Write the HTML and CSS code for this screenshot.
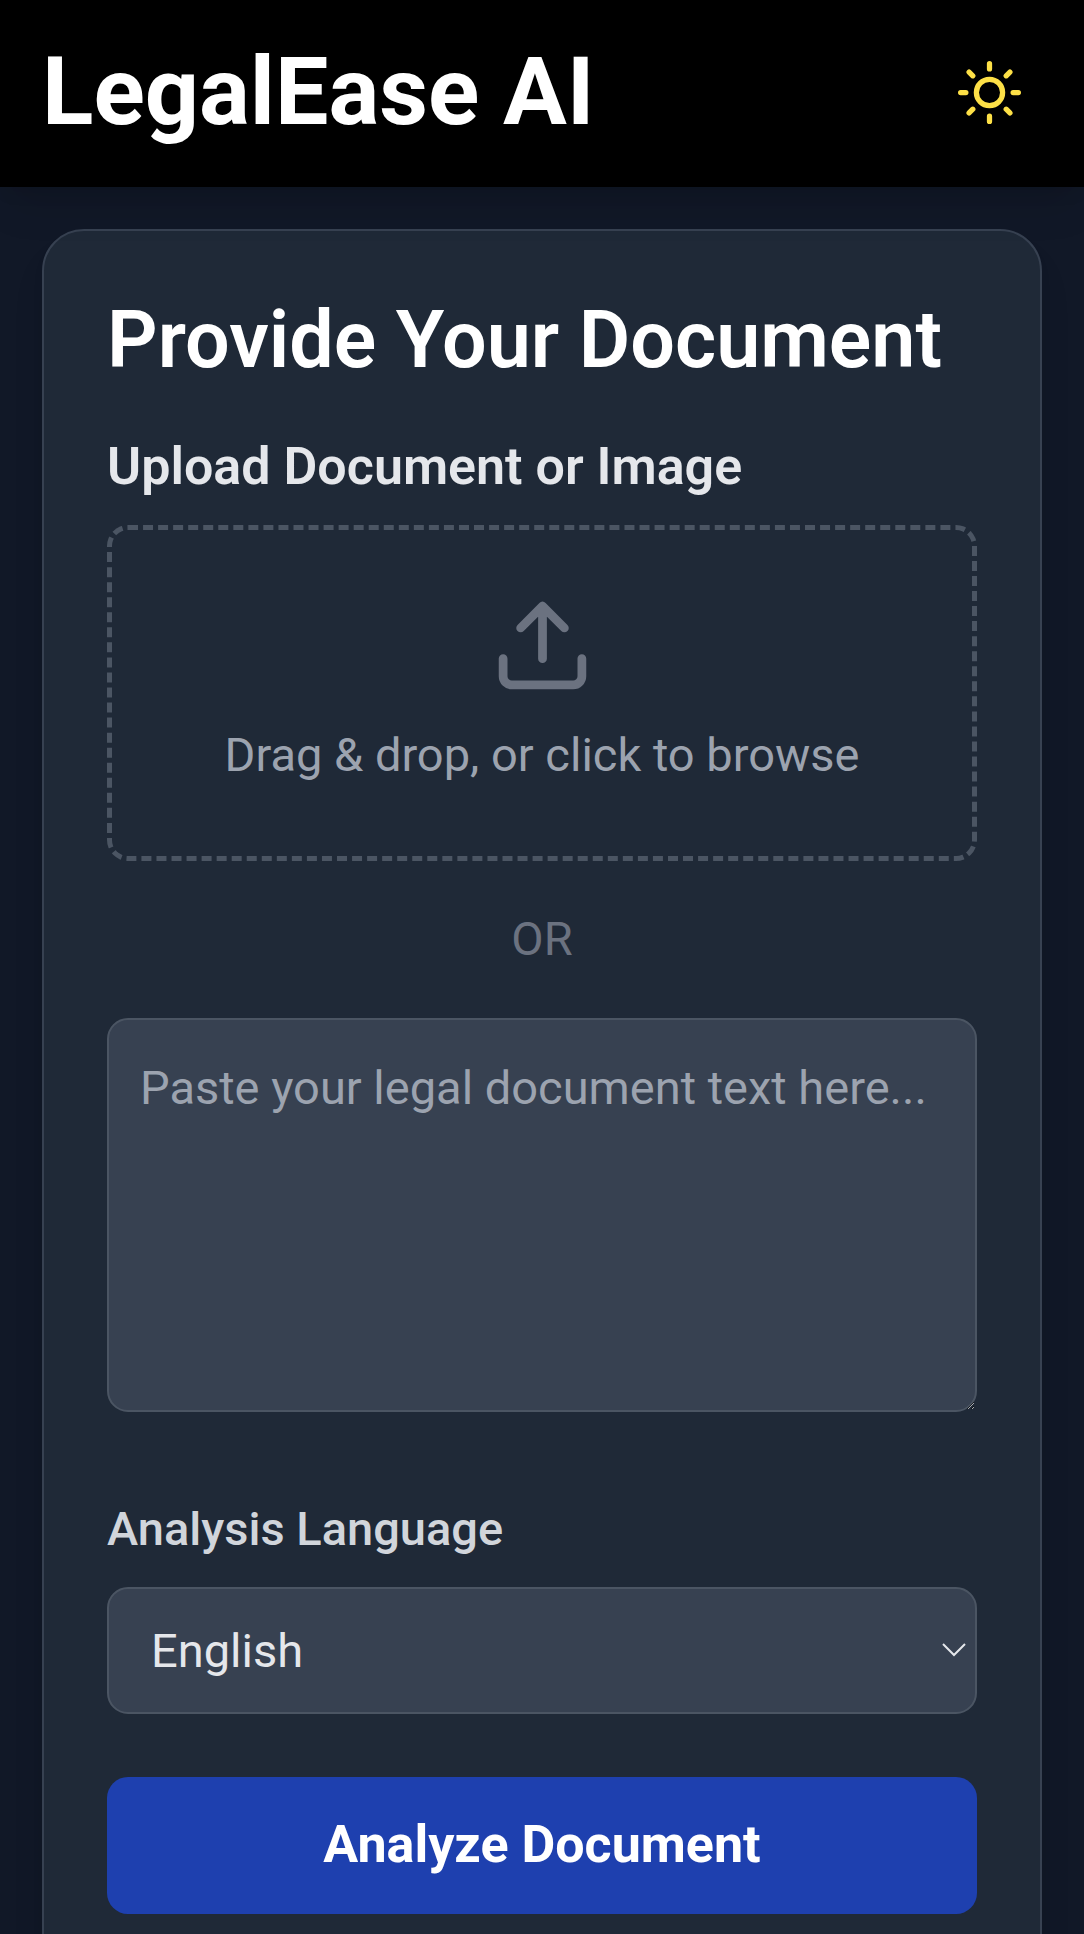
FILE: index.html
```html
<!DOCTYPE html>
<html lang="en">
<head>
  <meta charset="utf-8">
  <meta name="viewport" content="width=device-width, initial-scale=1">
  <title>LegalEase AI</title>
  <link rel="stylesheet" href="styles.css">
</head>
<body>
  <header class="header">
    <h1 class="brand">LegalEase AI</h1>
    <button class="theme-toggle" type="button" aria-label="Switch to light theme">
      <svg class="sun-icon" viewBox="0 0 24 24" aria-hidden="true">
        <circle cx="12" cy="12" r="5"/>
        <path d="M12 1v2M12 21v2M4.22 4.22l1.42 1.42M18.36 18.36l1.42 1.42M1 12h2M21 12h2M4.22 19.78l1.42-1.42M18.36 5.64l1.42-1.42"/>
      </svg>
    </button>
  </header>
  <main class="main">
    <form class="card">
      <h2 class="card-title">Provide Your Document</h2>
      <h3 class="section-title">Upload Document or Image</h3>
      <button class="dropzone" type="button">
        <svg class="upload-icon" viewBox="0 0 24 24" aria-hidden="true">
          <path d="M21 15v4a2 2 0 0 1-2 2H5a2 2 0 0 1-2-2v-4"/>
          <path d="M17 8l-5-5-5 5M12 3v12"/>
        </svg>
        <span>Drag &amp; drop, or click to browse</span>
      </button>
      <p class="divider">OR</p>
      <textarea class="field document-text" aria-label="Document text" placeholder="Paste your legal document text here..."></textarea>
      <label class="field-label" for="language">Analysis Language</label>
      <div class="select-wrap">
        <select class="field language" id="language">
          <option>English</option>
        </select>
        <svg class="chevron" viewBox="0 0 24 14" aria-hidden="true"><path d="M1 1l11 11 11-11"/></svg>
      </div>
      <button class="submit" type="submit">Analyze Document</button>
    </form>
  </main>
</body>
</html>
```
FILE: styles.css
```css
* {
  box-sizing: border-box;
}

body {
  margin: 0;
  min-height: 100vh;
  background: #111827;
  color: #e5e7eb;
  font-family: Roboto, "Liberation Sans", sans-serif;
  font-size: 47px;
  line-height: 74px;
}

h1, h2, h3, p {
  margin: 0;
}

button, select, textarea {
  font: inherit;
}

.header {
  position: relative;
  display: flex;
  align-items: center;
  justify-content: space-between;
  padding: 40px 42px 42px;
  background: #000;
  box-shadow: 0 26px 39px -8px rgba(0, 0, 0, 0.1), 0 10px 16px -6px rgba(0, 0, 0, 0.1);
}

.brand {
  color: #fff;
  font-size: 95px;
  font-weight: 700;
  line-height: 103px;
  padding-bottom: 2px;
}

.theme-toggle {
  display: flex;
  padding: 21px;
  border: 0;
  border-radius: 50%;
  background: none;
  color: #fde047;
}

.sun-icon, .upload-icon {
  fill: none;
  stroke: currentColor;
  stroke-width: 2;
  stroke-linecap: round;
  stroke-linejoin: round;
}

.sun-icon {
  width: 63px;
  height: 63px;
}

.main {
  padding: 42px;
}

.card {
  display: flex;
  flex-direction: column;
  padding: 63px;
  border: 2px solid #374151;
  border-radius: 42px;
  background: #1f2937;
  box-shadow: 0 26px 39px -8px rgba(0, 0, 0, 0.1), 0 10px 16px -6px rgba(0, 0, 0, 0.1);
}

.card-title {
  margin-bottom: 44px;
  color: #fff;
  font-size: 79px;
  font-weight: 600;
  line-height: 92px;
}

.section-title {
  margin-bottom: 21px;
  font-size: 52px;
  font-weight: 600;
}

.dropzone {
  display: flex;
  flex-direction: column;
  align-items: center;
  gap: 20px;
  padding: 63px 63px 64px;
  border: 5px dashed #4b5563;
  border-radius: 21px;
  background: none;
  color: #9ca3af;
}

.upload-icon {
  width: 105px;
  height: 105px;
  color: #6b7280;
}

.divider {
  margin: 41px 0 42px;
  color: #6b7280;
  text-align: center;
}

.field {
  width: 100%;
  border: 2px solid #4b5563;
  border-radius: 21px;
  background: #374151;
  color: #e5e7eb;
}

.document-text {
  height: 394px;
  margin-bottom: 80px;
  padding: 31px;
  resize: vertical;
}

.document-text::placeholder {
  color: #9ca3af;
}

.field-label {
  margin-bottom: 21px;
  color: #d1d5db;
  font-weight: 500;
}

.select-wrap {
  position: relative;
  display: flex;
  margin-bottom: 63px;
}

.language {
  height: 127px;
  padding: 0 42px;
  appearance: none;
}

.chevron {
  position: absolute;
  top: 56px;
  right: 11px;
  width: 24px;
  height: 14px;
  fill: none;
  stroke: #e5e7eb;
  stroke-width: 2;
  pointer-events: none;
}

.submit {
  padding: 31px 32px 32px;
  border: 0;
  border-radius: 21px;
  background: #1e40af;
  color: #fff;
  font-size: 52px;
  font-weight: 700;
}
```
